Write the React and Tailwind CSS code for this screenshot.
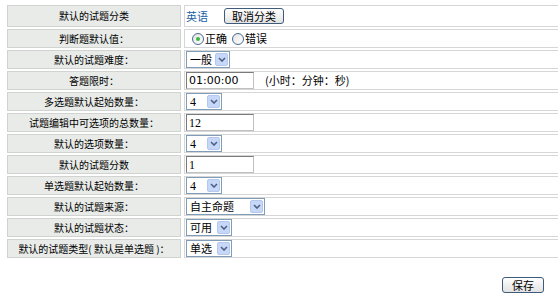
const rows = [
  { label: '默认的试题分类', kind: 'category' },
  { label: '判断题默认值：', kind: 'radio' },
  { label: '默认的试题难度：', kind: 'select', value: '一般', width: 'w-[44px]' },
  { label: '答题限时：', kind: 'time' },
  { label: '多选题默认起始数量：', kind: 'select', value: '4', width: 'w-[36px]', serif: true },
  { label: '试题编辑中可选项的总数量：', kind: 'input', value: '12' },
  { label: '默认的选项数量：', kind: 'select', value: '4', width: 'w-[36px]', serif: true },
  { label: '默认的试题分数', kind: 'input', value: '1' },
  { label: '单选题默认起始数量：', kind: 'select', value: '4', width: 'w-[36px]', serif: true },
  { label: '默认的试题来源：', kind: 'select', value: '自主命题', width: 'w-[79px]' },
  { label: '默认的试题状态：', kind: 'select', value: '可用', width: 'w-[46px]' },
  { label: '默认的试题类型( 默认是单选题 )：', kind: 'select', value: '单选', width: 'w-[46px]' },
]

function Chevron() {
  return (
    <svg width="8" height="5" viewBox="0 0 8 5">
      <path d="M1 1 L4 4 L7 1" fill="none" stroke="#4d6185" strokeWidth="1.6" />
    </svg>
  )
}

function Select({ value, width, serif }) {
  return (
    <div className={`flex h-[17px] items-center justify-between border border-[#7f9db9] bg-white pl-[3px] pr-px ${width}`}>
      <span className={`text-[11px] leading-none ${serif ? "font-['Liberation_Serif',serif] text-[12px]" : ''}`}>{value}</span>
      <span className="flex h-[13px] w-[13px] items-center justify-center rounded-[2px] border border-[#b4c7ee] bg-[#c7d7f8]">
        <Chevron />
      </span>
    </div>
  )
}

function TextInput({ value, serif }) {
  return (
    <input
      readOnly
      defaultValue={value}
      className={`h-[17px] w-[68px] border border-[#c0c0c0] border-t-[#7a7a7a] border-l-[#7a7a7a] bg-white px-[2px] text-[11px] outline-none ${
        serif ? "font-['Liberation_Serif',serif] text-[12px]" : "font-['DejaVu_Sans',sans-serif] text-[10px]"
      }`}
    />
  )
}

function Button({ children, className }) {
  return (
    <button
      className={`flex h-[16px] items-center justify-center rounded-[3px] border border-[#3f5b7a] bg-gradient-to-b from-white to-[#e2e2e2] text-[11px] leading-none text-black ${className}`}
    >
      {children}
    </button>
  )
}

function Radio({ checked, label }) {
  return (
    <label className="flex items-center gap-px">
      <span className="flex h-[12px] w-[12px] items-center justify-center rounded-full border border-[#4a6a8f] bg-gradient-to-br from-[#e4e4e4] to-white">
        {checked && <span className="h-[4px] w-[4px] rounded-full bg-[#3cb93c]" />}
      </span>
      <span className="text-[11px]">{label}</span>
    </label>
  )
}

function Value({ row }) {
  switch (row.kind) {
    case 'category':
      return (
        <div className="flex items-center gap-[16px]">
          <span className="text-[11px] text-[#1b5fa6]">英语</span>
          <Button className="w-[60px]">取消分类</Button>
        </div>
      )
    case 'radio':
      return (
        <div className="flex items-center gap-[5px] pl-[6px]">
          <Radio checked label="正确" />
          <Radio label="错误" />
        </div>
      )
    case 'time':
      return (
        <div className="flex items-center gap-[11px]">
          <TextInput value="01:00:00" />
          <span className="text-[11px]">(小时：分钟：秒)</span>
        </div>
      )
    case 'input':
      return <TextInput value={row.value} serif />
    default:
      return <Select value={row.value} width={row.width} serif={row.serif} />
  }
}

export default function App() {
  return (
    <div className="h-[296px] w-[558px] overflow-hidden bg-white pl-[7px] pt-[5px] font-['Noto_Sans_CJK_SC',sans-serif] text-black">
      <div className="grid grid-cols-[174px_1fr] gap-x-[3px] gap-y-[2px]">
        {rows.map((row, i) => (
          <div key={i} className="contents">
            <div
              className={`flex items-center justify-center border border-[#d0d3d0] bg-[#e8ebe8] text-[10px] leading-none text-black ${
                i === 0 ? 'h-[22px]' : 'h-[19px]'
              }`}
            >
              {row.label}
            </div>
            <div className={`flex items-center border border-r-0 border-[#d6d6d6] pl-px ${i === 0 ? 'h-[22px]' : 'h-[19px]'}`}>
              <Value row={row} />
            </div>
          </div>
        ))}
      </div>
      <div className="mt-[19px] flex justify-end pr-[14px]">
        <Button className="w-[42px]">保存</Button>
      </div>
    </div>
  )
}
